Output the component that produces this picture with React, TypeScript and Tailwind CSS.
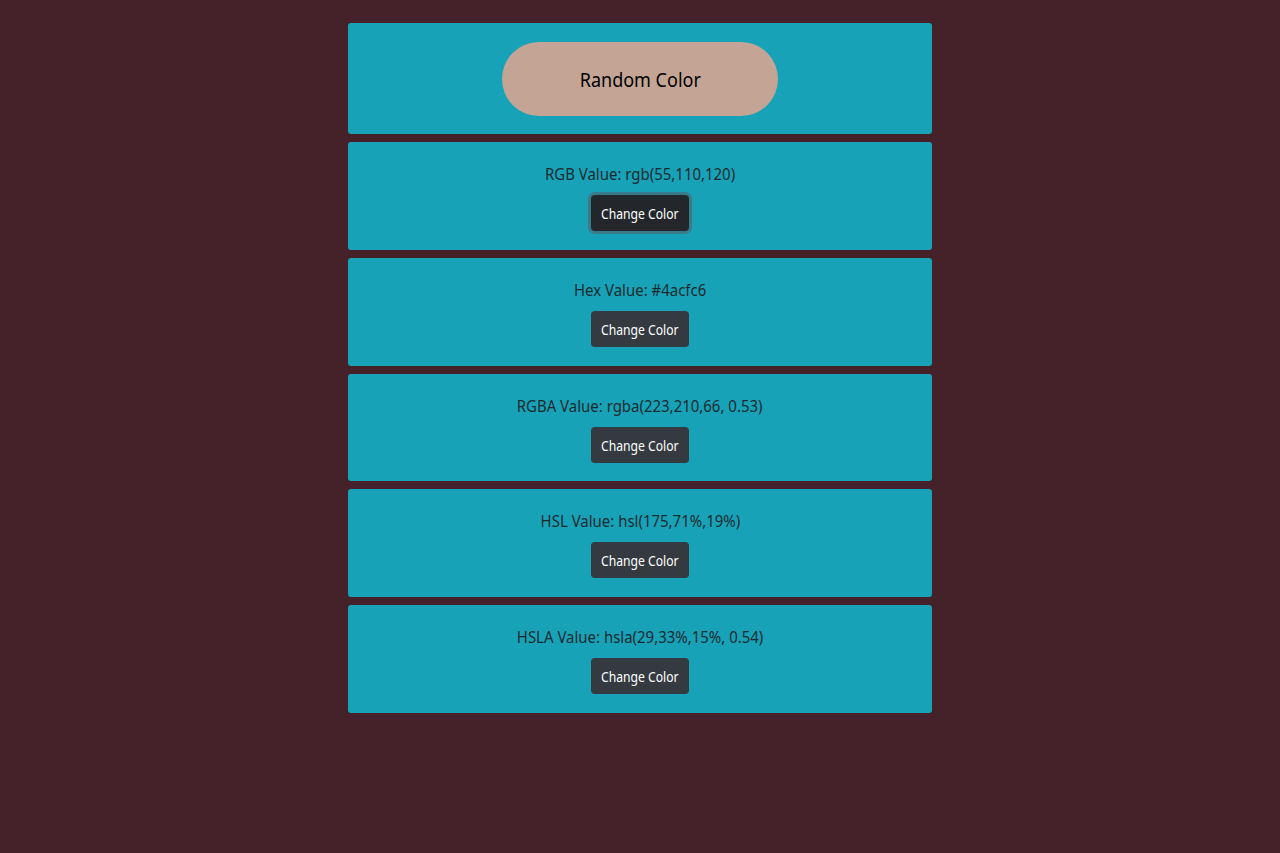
import React from 'react';

const values = [
  { label: 'RGB Value: rgb(55,110,120)', focused: true },
  { label: 'Hex Value: #4acfc6', focused: false },
  { label: 'RGBA Value: rgba(223,210,66, 0.53)', focused: false },
  { label: 'HSL Value: hsl(175,71%,19%)', focused: false },
  { label: 'HSLA Value: hsla(29,33%,15%, 0.54)', focused: false },
];

const ValueCard = ({ label, focused }: { label: string; focused: boolean }) => (
  <div className="bg-[#17a2b8] rounded-[3px] h-[107.75px] pt-[20px] flex flex-col items-center">
    <p className="text-[17px] leading-6 text-[#1b2a2f] whitespace-nowrap scale-x-[0.88]">{label}</p>
    <button
      className={`mt-[9px] h-[36px] w-[98px] rounded-[4px] text-white ${
        focused ? 'bg-[#23272b] ring-[3px] ring-[#52606d]/60' : 'bg-[#343a40]'
      }`}
    >
      <span className="inline-block text-[15px] whitespace-nowrap scale-x-[0.81]">Change Color</span>
    </button>
  </div>
);

export default function App() {
  return (
    <div
      className="min-h-[853px] bg-[#452229] pt-[23px]"
      style={{ fontFamily: '"Noto Sans", "Open Sans", sans-serif' }}
    >
      <div className="w-[584px] mx-auto flex flex-col gap-[8px]">
        <div className="bg-[#17a2b8] rounded-[3px] h-[111px] flex items-center justify-center">
          <button className="w-[276px] h-[74px] rounded-full bg-[#c4a595] text-black pt-[3px]">
            <span className="inline-block text-[20px] whitespace-nowrap scale-x-[0.9]">Random Color</span>
          </button>
        </div>
        {values.map((v) => (
          <ValueCard key={v.label} label={v.label} focused={v.focused} />
        ))}
      </div>
    </div>
  );
}
